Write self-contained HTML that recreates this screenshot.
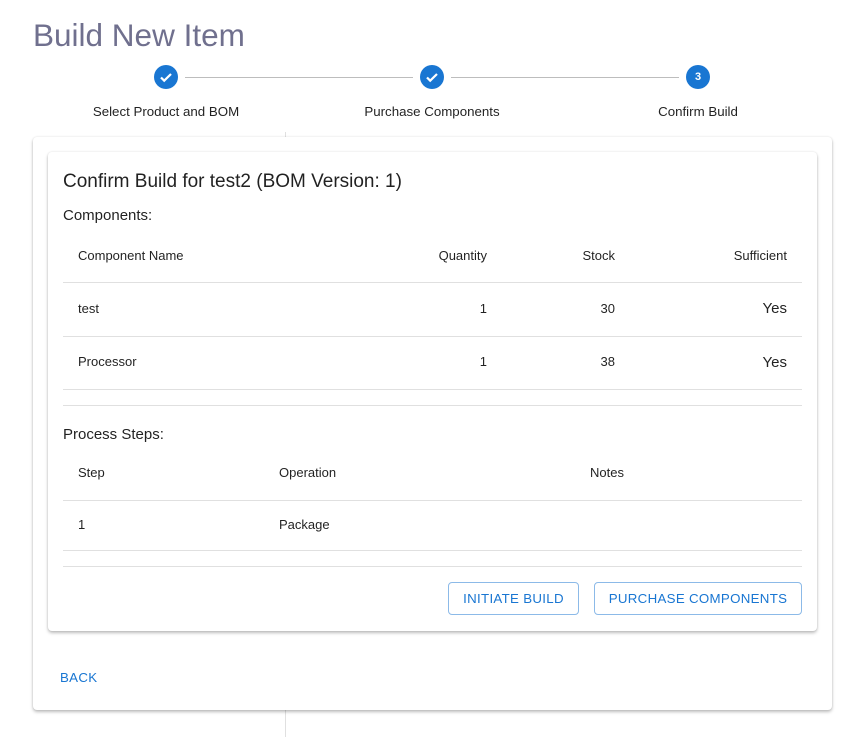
<!DOCTYPE html>
<html><head><style>
body{margin:0;width:865px;height:737px;background:#fff;font-family:"Liberation Sans",sans-serif;position:relative;overflow:hidden;color:rgba(0,0,0,.87)}
.a{position:absolute}
.c{position:absolute;width:24px;height:24px;border-radius:50%;background:#1976d2;top:65px}
.ln{position:absolute;height:1px;background:#bdbdbd;top:77px}
.lab{position:absolute;top:104px;font-size:13.3px;transform:translateX(-50%);white-space:nowrap}
.hl{position:absolute;left:63px;width:739px;height:1px;background:#e0e0e0}
.t{position:absolute;font-size:13px}
.r{text-align:right}
.btn{position:absolute;top:582px;height:33px;border:1px solid rgba(25,118,210,.5);border-radius:4px;color:#1976d2;font-size:13.3px;letter-spacing:.3px;line-height:31px;text-align:center;box-sizing:border-box}
</style></head><body>
<div class="a" style="left:33px;top:17px;font-size:31.5px;color:#70708e">Build New Item</div>
<div class="c" style="left:154px"><svg width="24" height="24" viewBox="0 0 24 24"><path d="M7 12.5l3.2 3.2L17 9" stroke="#fff" stroke-width="2.2" fill="none"/></svg></div>
<div class="c" style="left:420px"><svg width="24" height="24" viewBox="0 0 24 24"><path d="M7 12.5l3.2 3.2L17 9" stroke="#fff" stroke-width="2.2" fill="none"/></svg></div>
<div class="c" style="left:686px;color:#fff;font-size:11px;font-weight:bold;text-align:center;line-height:24px">3</div>
<div class="ln" style="left:185px;width:228px"></div>
<div class="ln" style="left:451px;width:228px"></div>
<div class="lab" style="left:166px">Select Product and BOM</div>
<div class="lab" style="left:432px">Purchase Components</div>
<div class="lab" style="left:698px">Confirm Build</div>
<div class="a" style="left:285px;top:132px;width:1px;height:605px;background:#e0e0e0"></div>
<div class="a" style="left:33px;top:137px;width:799px;height:573px;background:#fff;border-radius:4px;box-shadow:0 2px 3px rgba(0,0,0,.25),0 0 2px rgba(0,0,0,.1)"></div>
<div class="a" style="left:48px;top:152px;width:769px;height:479px;background:#fff;border-radius:4px;box-shadow:0 2px 3px rgba(0,0,0,.25),0 0 2px rgba(0,0,0,.1)"></div>
<div class="a" style="left:63px;top:171px;font-size:19px">Confirm Build for test2 (BOM Version: 1)</div>
<div class="a" style="left:63px;top:207px;font-size:15px">Components:</div>
<div class="t" style="left:78px;top:248px">Component Name</div>
<div class="t r" style="left:387px;width:100px;top:248px">Quantity</div>
<div class="t r" style="left:515px;width:100px;top:248px">Stock</div>
<div class="t r" style="left:687px;width:100px;top:248px">Sufficient</div>
<div class="hl" style="top:282px"></div>
<div class="t" style="left:78px;top:301px">test</div>
<div class="t r" style="left:387px;width:100px;top:301px">1</div>
<div class="t r" style="left:515px;width:100px;top:301px">30</div>
<div class="t r" style="left:687px;width:100px;top:300px;font-size:15px">Yes</div>
<div class="hl" style="top:336px"></div>
<div class="t" style="left:78px;top:354px">Processor</div>
<div class="t r" style="left:387px;width:100px;top:354px">1</div>
<div class="t r" style="left:515px;width:100px;top:354px">38</div>
<div class="t r" style="left:687px;width:100px;top:354px;font-size:15px">Yes</div>
<div class="hl" style="top:389px"></div>
<div class="hl" style="top:405px"></div>
<div class="a" style="left:63px;top:426px;font-size:15px">Process Steps:</div>
<div class="t" style="left:78px;top:465px">Step</div>
<div class="t" style="left:279px;top:465px">Operation</div>
<div class="t" style="left:590px;top:465px">Notes</div>
<div class="hl" style="top:500px"></div>
<div class="t" style="left:78px;top:517px">1</div>
<div class="t" style="left:279px;top:517px">Package</div>
<div class="hl" style="top:550px"></div>
<div class="hl" style="top:566px"></div>
<div class="btn" style="left:448px;width:131px">INITIATE BUILD</div>
<div class="btn" style="left:594px;width:208px">PURCHASE COMPONENTS</div>
<div class="a" style="left:60px;top:670px;font-size:13.3px;color:#1976d2;letter-spacing:.3px">BACK</div>
</body></html>
